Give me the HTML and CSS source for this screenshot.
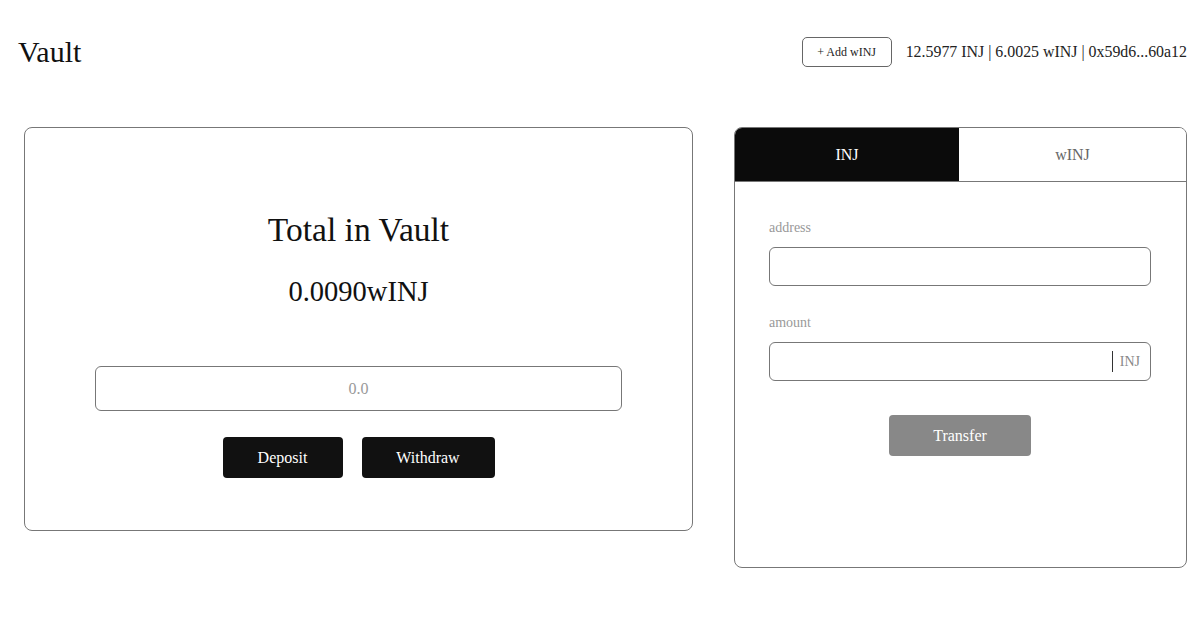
FILE: index.html
```html
<!DOCTYPE html>
<html lang="en">
<head>
<meta charset="utf-8">
<title>Vault</title>
<link rel="stylesheet" href="styles.css">
</head>
<body>
<header class="header">
  <h1 class="title">Vault</h1>
  <div class="account">
    <button class="add-btn">+ Add wINJ</button>
    <span class="balances">12.5977 INJ | 6.0025 wINJ | 0x59d6...60a12</span>
  </div>
</header>
<main class="main">
  <section class="vault-card">
    <h2 class="vault-title">Total in Vault</h2>
    <div class="vault-amount">0.0090wINJ</div>
    <input class="vault-input" type="text" placeholder="0.0">
    <div class="vault-actions">
      <button class="dark-btn deposit">Deposit</button>
      <button class="dark-btn withdraw">Withdraw</button>
    </div>
  </section>
  <section class="transfer-card">
    <div class="tabs">
      <div class="tab active">INJ</div>
      <div class="tab">wINJ</div>
    </div>
    <form class="transfer-form">
      <label class="field-label">address</label>
      <div class="field"><input class="field-input" type="text"></div>
      <label class="field-label amount-label">amount</label>
      <div class="field">
        <input class="field-input" type="text">
        <span class="suffix">INJ</span>
      </div>
      <div class="transfer-row">
        <button type="button" class="transfer-btn">Transfer</button>
      </div>
    </form>
  </section>
</main>
</body>
</html>
```
FILE: styles.css
```css
* { box-sizing: border-box; }
html, body { margin: 0; padding: 0; background: #fff; }
body {
  font-family: "Liberation Serif", "Times New Roman", serif;
  color: #111;
}
.header {
  display: flex;
  align-items: center;
  justify-content: space-between;
  padding: 35px 13px 0 18px;
}
.title {
  margin: 0;
  font-size: 30px;
  font-weight: normal;
  line-height: 34px;
}
.account {
  display: flex;
  align-items: center;
  gap: 14px;
}
.add-btn {
  width: 90px;
  height: 30px;
  border: 1px solid #666;
  border-radius: 5px;
  background: #fff;
  font-family: inherit;
  font-size: 12px;
  color: #222;
  padding: 0;
}
.balances {
  font-size: 15.9px;
  color: #222;
}
.main {
  display: flex;
  align-items: flex-start;
  gap: 41px;
  padding: 58px 0 0 24px;
}
.vault-card {
  width: 669px;
  height: 404px;
  border: 1px solid #777;
  border-radius: 8px;
  display: flex;
  flex-direction: column;
  align-items: center;
  padding-top: 83px;
}
.vault-title {
  margin: 0;
  font-size: 33.5px;
  font-weight: normal;
  line-height: 38px;
}
.vault-amount {
  margin-top: 27px;
  font-size: 28.5px;
  line-height: 32px;
}
.vault-input {
  margin-top: 58px;
  width: 527px;
  height: 45px;
  border: 1px solid #777;
  border-radius: 6px;
  text-align: center;
  font-family: inherit;
  font-size: 16px;
  outline: none;
}
.vault-input::placeholder { color: #999; }
.vault-actions {
  margin-top: 26px;
  display: flex;
  gap: 19px;
}
.dark-btn {
  height: 41px;
  border: none;
  border-radius: 4px;
  background: #111;
  color: #fff;
  font-family: inherit;
  font-size: 16px;
  padding: 0;
}
.deposit { width: 120px; }
.withdraw { width: 133px; }
.transfer-card {
  width: 453px;
  height: 441px;
  border: 1px solid #777;
  border-radius: 8px;
  overflow: hidden;
}
.tabs {
  display: flex;
  height: 54px;
  border-bottom: 1px solid #777;
}
.tab {
  flex: 1;
  display: flex;
  align-items: center;
  justify-content: center;
  font-size: 16px;
  color: #666;
  background: #fff;
}
.tab.active {
  background: #0b0b0b;
  color: #fff;
  flex: 0 0 224px;
}
.transfer-form {
  display: flex;
  flex-direction: column;
  padding: 38px 35px 0 34px;
}
.field-label {
  font-size: 14px;
  line-height: 16px;
  color: #999;
}
.amount-label { margin-top: 29px; }
.field {
  margin-top: 11px;
  height: 39px;
  border: 1px solid #777;
  border-radius: 6px;
  display: flex;
  align-items: center;
}
.field-input {
  flex: 1;
  min-width: 0;
  height: 100%;
  border: none;
  background: transparent;
  outline: none;
  font-family: inherit;
  font-size: 16px;
  padding: 0 10px;
}
.suffix {
  border-left: 1px solid #333;
  height: 21px;
  line-height: 21px;
  padding: 0 10px 0 7px;
  font-size: 14px;
  color: #888;
}
.transfer-row {
  display: flex;
  justify-content: center;
  margin-top: 34px;
}
.transfer-btn {
  width: 142px;
  height: 41px;
  border: none;
  border-radius: 4px;
  background: #888;
  color: #fff;
  font-family: inherit;
  font-size: 16px;
  padding: 0;
}
```
